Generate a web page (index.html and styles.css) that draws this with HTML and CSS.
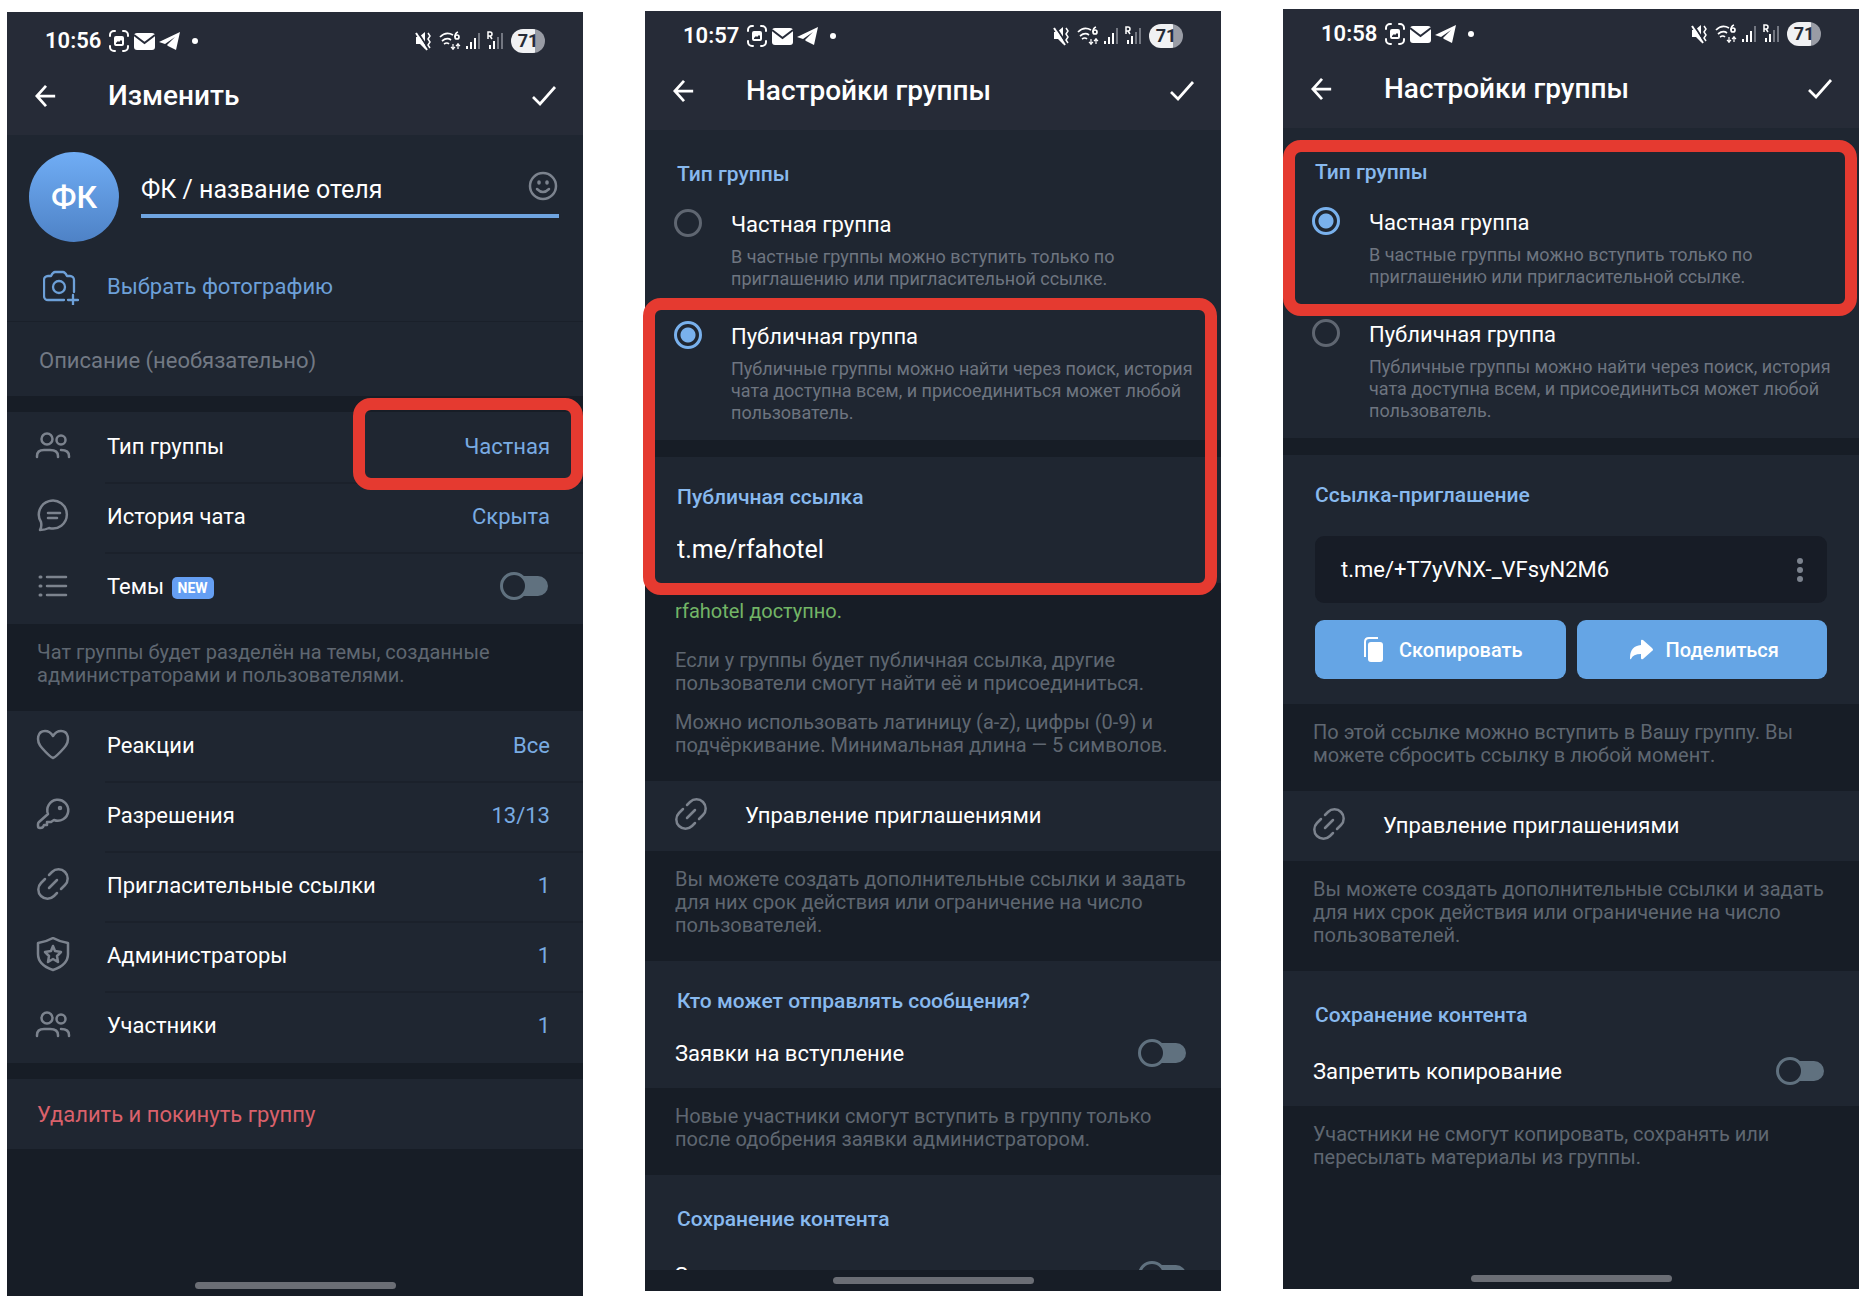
FILE: index.html
```html
<!DOCTYPE html>
<html lang="ru">

<head>
    <title>Настройки группы</title>
    <meta charset="utf-8">
    <meta name="viewport" content="width=device-width, initial-scale=1.0">
    <link rel="stylesheet" href="styles.css">
</head>

<body>
    <!-- shared icons -->
    <svg class="sprite" aria-hidden="true">
        <symbol id="i-notes" viewBox="0 0 94 22">
            <g fill="none" stroke="#fff" stroke-width="2" stroke-linecap="round">
                <path d="M1 6V5a4 4 0 0 1 4-4h1M14 1h1a4 4 0 0 1 4 4v1M19 16v1a4 4 0 0 1-4 4h-1M6 21H5a4 4 0 0 1-4-4v-1" />
            </g>
            <path fill="#fff" fill-rule="evenodd" d="M7 6h6a2 2 0 0 1 2 2v6a2 2 0 0 1-2 2H7a2 2 0 0 1-2-2V8a2 2 0 0 1 2-2zM7 14h6v-3l-1-1-2 2-1-1-2 2z" />
            <rect x="25" y="3" width="21" height="17" rx="3" fill="#fff" />
            <path d="M25 5l10.500 8L46 5" fill="none" stroke="#262b38" stroke-width="2" />
            <path fill="#fff" d="M71 2L50 12l6 2 10-7-8 8 1 1 8 4z" />
            <circle cx="86" cy="11" r="3" fill="#fff" />
        </symbol>
        <symbol id="i-signal" viewBox="0 0 90 24">
            <path fill="#fff" d="M1 8h3l6-5v17l-5-5H1z" />
            <path d="M2 2l11 17" stroke="#262b38" stroke-width="2" />
            <path d="M1 4l11 17" stroke="#fff" stroke-width="2" />
            <path d="M13 4l2 3-2 3 2 3-2 3 2 3" fill="none" stroke="#fff" stroke-width="1.500" />
            <g fill="none" stroke="#fff" stroke-width="1.700">
                <path d="M25 8q6-6 13-2M27 12q5-4 9-1M29 15q3-2 5 0" />
                <circle cx="42" cy="8" r="2" />
                <path d="M43 3q-3 1-3 5" />
                <path d="M38 15v6M36 18l2 2 2-2M43 20v-6M41 17l2-2 2 2" stroke-width="1.200" />
            </g>
            <path fill="#fff" d="M51 17h2v3h-2zM55 13h2v7h-2zM59 9h2v11h-2zM74 16h2v4h-2zM78 12h2v8h-2z" />
            <path fill="#737781" d="M63 4h2v16h-2zM82 8h2v12h-2zM86 4h2v16h-2z" />
            <path d="M73 10V3h2q2 0 2 2t-2 2h-2m2 0l2 3" fill="none" stroke="#fff" stroke-width="1.500" />
        </symbol>
        <symbol id="i-back" viewBox="0 0 24 24"><path d="M22 12H2M12 1L2 12l10 11" /></symbol>
        <symbol id="i-check" viewBox="0 0 26 24" stroke-width="2.700"><path d="M2 13l7 7L24 3" /></symbol>
        <symbol id="i-smile" viewBox="0 0 32 32" stroke-width="2.500">
            <circle cx="16" cy="16" r="13" /><path d="M10 19q6 6 12 0" /><path d="M12 12v1M20 12v1" stroke-width="3.500" />
        </symbol>
        <symbol id="i-camera" viewBox="0 0 36 36" stroke-width="2.300">
            <path d="M21 31H5a4 4 0 0 1-4-4V11a4 4 0 0 1 4-4h3q2-4 4-4h8q2 0 4 4h3a4 4 0 0 1 4 4v12M30 26v10M25 31h10" />
            <circle cx="16" cy="18" r="6" />
        </symbol>
        <symbol id="i-group" viewBox="0 0 36 36" stroke-width="2.500">
            <circle cx="12" cy="11" r="5.500" /><circle cx="26" cy="12" r="4.500" />
            <path d="M2 29v-1q0-6 7-6h6q8 0 8 6v1M26 22q8 0 8 6v1" />
        </symbol>
        <symbol id="i-chat" viewBox="0 0 36 36" stroke-width="2.500">
            <path d="M5 32q2-3 1-8A14 14 0 1 1 14 30q-4 2-9 2zM13 15h12M13 20h9" />
        </symbol>
        <symbol id="i-list" viewBox="0 0 36 36" stroke-width="2.500">
            <path d="M12 9h19M12 18h19M12 27h19" /><path d="M5 9h1M5 18h1M5 27h1" stroke-width="3" />
        </symbol>
        <symbol id="i-heart" viewBox="0 0 36 36" stroke-width="2.500">
            <path d="M18 31q-3-1-11-10C0 13 3 4 10 4q5 0 8 5 3-5 8-5c7 0 10 9 3 17q-8 9-11 10z" />
        </symbol>
        <symbol id="i-key" viewBox="0 0 36 36" stroke-width="2.500">
            <path d="M13 17A10.500 10.500 0 1 1 19 23l-3 2h-4v3H9l-1 2q-1 1-3 1-2 0-2-2v-2q0-1 1-2z" /><circle cx="25" cy="11" r="1" />
        </symbol>
        <symbol id="i-link" viewBox="0 0 36 36" stroke-width="2.500">
            <path d="M14 8l3-3a9 9 0 0 1 13 13l-4 4M22 26l-3 3A9 9 0 0 1 6 16l4-4M14 21l8-8" />
        </symbol>
        <symbol id="i-shield" viewBox="0 0 36 36" stroke-width="2.500">
            <path d="M18 1q7 4 15 5v11q0 11-15 16Q3 28 3 17V6q8-1 15-5z" />
            <path d="M18 9l2 5 6 1-4 4 1 6-5-3-5 3 1-6-4-4 6-1z" />
        </symbol>
    </svg>

    <div class="screens">
        <!-- edit group -->
        <div class="phone phone-edit">
            <header>
                <div class="status">
                    <span class="time">10:56</span>
                    <svg class="notes"><use href="#i-notes" /></svg>
                    <svg class="signal"><use href="#i-signal" /></svg>
                    <span class="battery">71</span>
                </div>
                <div class="bar">
                    <button class="tool" aria-label="Назад"><svg class="back"><use href="#i-back" /></svg></button>
                    <h1>Изменить</h1>
                    <button class="tool" aria-label="Готово"><svg class="check"><use href="#i-check" /></svg></button>
                </div>
            </header>
            <main>
                <section>
                    <div class="profile">
                        <div class="avatar">ФК</div>
                        <div class="name">
                            <input type="text" aria-label="Название группы" value="ФК / название отеля">
                            <button class="tool" aria-label="Эмодзи"><svg class="smile"><use href="#i-smile" /></svg></button>
                        </div>
                    </div>
                    <button class="photo">
                        <svg class="icon camera"><use href="#i-camera" /></svg>
                        Выбрать фотографию
                    </button>
                    <input class="about" type="text" aria-label="Описание" placeholder="Описание (необязательно)">
                </section>
                <section class="gap rows">
                    <a class="row" href="#"><svg class="icon"><use href="#i-group" /></svg><span>Тип группы</span><b>Частная</b><i class="mark mark-value"></i></a>
                    <a class="row" href="#"><svg class="icon"><use href="#i-chat" /></svg><span>История чата</span><b>Скрыта</b></a>
                    <label class="row"><svg class="icon"><use href="#i-list" /></svg><span>Темы <em>NEW</em></span><input class="switch" type="checkbox"></label>
                </section>
                <p class="note">Чат группы будет разделён на темы, созданные администраторами и пользователями.</p>
                <section class="rows">
                    <a class="row" href="#"><svg class="icon"><use href="#i-heart" /></svg><span>Реакции</span><b>Все</b></a>
                    <a class="row" href="#"><svg class="icon"><use href="#i-key" /></svg><span>Разрешения</span><b>13/13</b></a>
                    <a class="row" href="#"><svg class="icon"><use href="#i-link" /></svg><span>Пригласительные ссылки</span><b>1</b></a>
                    <a class="row" href="#"><svg class="icon"><use href="#i-shield" /></svg><span>Администраторы</span><b>1</b></a>
                    <a class="row" href="#"><svg class="icon"><use href="#i-group" /></svg><span>Участники</span><b>1</b></a>
                </section>
                <section class="gap">
                    <button class="delete">Удалить и покинуть группу</button>
                </section>
            </main>
            <footer></footer>
        </div>

        <!-- public group -->
        <div class="phone phone-public">
            <header>
                <div class="status">
                    <span class="time">10:57</span>
                    <svg class="notes"><use href="#i-notes" /></svg>
                    <svg class="signal"><use href="#i-signal" /></svg>
                    <span class="battery">71</span>
                </div>
                <div class="bar">
                    <button class="tool" aria-label="Назад"><svg class="back"><use href="#i-back" /></svg></button>
                    <h1>Настройки группы</h1>
                    <button class="tool" aria-label="Готово"><svg class="check"><use href="#i-check" /></svg></button>
                </div>
            </header>
            <main>
                <section class="types">
                    <h2>Тип группы</h2>
                    <label class="option">
                        <input type="radio" name="public-type">
                        <span>Частная группа<small>В частные группы можно вступить только по приглашению или пригласительной ссылке.</small></span>
                    </label>
                    <label class="option">
                        <input type="radio" name="public-type" checked>
                        <span>Публичная группа<small>Публичные группы можно найти через поиск, история чата доступна всем, и присоединиться может любой пользователь.</small></span>
                    </label>
                </section>
                <section class="gap">
                    <h2>Публичная ссылка</h2>
                    <input class="address" type="text" aria-label="Публичная ссылка" value="t.me/rfahotel">
                </section>
                <div class="note note-link">
                    <p class="ok">rfahotel доступно.</p>
                    <p>Если у группы будет публичная ссылка, другие пользователи смогут найти её и присоединиться.</p>
                    <p>Можно использовать латиницу (a-z), цифры (0-9) и подчёркивание. Минимальная длина — 5 символов.</p>
                </div>
                <section>
                    <a class="row" href="#"><svg class="icon"><use href="#i-link" /></svg><span>Управление приглашениями</span></a>
                </section>
                <p class="note">Вы можете создать дополнительные ссылки и задать для них срок действия или ограничение на число пользователей.</p>
                <section>
                    <h2>Кто может отправлять сообщения?</h2>
                    <label class="row plain"><span>Заявки на вступление</span><input class="switch" type="checkbox"></label>
                </section>
                <p class="note">Новые участники смогут вступить в группу только после одобрения заявки администратором.</p>
                <section class="saving">
                    <h2>Сохранение контента</h2>
                    <label class="row plain"><span>Запретить копирование</span><input class="switch" type="checkbox"></label>
                </section>
            </main>
            <footer></footer>
            <i class="mark mark-public"></i>
        </div>

        <!-- private group -->
        <div class="phone phone-private">
            <header>
                <div class="status">
                    <span class="time">10:58</span>
                    <svg class="notes"><use href="#i-notes" /></svg>
                    <svg class="signal"><use href="#i-signal" /></svg>
                    <span class="battery">71</span>
                </div>
                <div class="bar">
                    <button class="tool" aria-label="Назад"><svg class="back"><use href="#i-back" /></svg></button>
                    <h1>Настройки группы</h1>
                    <button class="tool" aria-label="Готово"><svg class="check"><use href="#i-check" /></svg></button>
                </div>
            </header>
            <main>
                <section class="types">
                    <h2>Тип группы</h2>
                    <label class="option">
                        <input type="radio" name="private-type" checked>
                        <span>Частная группа<small>В частные группы можно вступить только по приглашению или пригласительной ссылке.</small></span>
                    </label>
                    <label class="option">
                        <input type="radio" name="private-type">
                        <span>Публичная группа<small>Публичные группы можно найти через поиск, история чата доступна всем, и присоединиться может любой пользователь.</small></span>
                    </label>
                </section>
                <section class="gap">
                    <h2>Ссылка-приглашение</h2>
                    <div class="link">
                        <a href="#">t.me/+T7yVNX-_VFsyN2M6</a>
                        <button class="tool" aria-label="Ещё">
                            <svg class="dots" viewBox="0 0 6 26"><circle cx="3" cy="4" r="3" /><circle cx="3" cy="13" r="3" /><circle cx="3" cy="22" r="3" /></svg>
                        </button>
                    </div>
                    <div class="buttons">
                        <button>
                            <svg viewBox="0 0 28 28"><path d="M7 21V6q0-4 4-4h9" fill="none" stroke="#fff" stroke-width="2" /><rect x="10" y="6" width="15" height="20" rx="3" /></svg>
                            Скопировать
                        </button>
                        <button>
                            <svg viewBox="0 0 28 28"><path d="M16 9V5q0-2 2-1l9 8q2 2 0 3l-9 8q-2 1-2-1v-4q-8 0-10 5-1 1-1-1Q5 10 16 9z" /></svg>
                            Поделиться
                        </button>
                    </div>
                </section>
                <p class="note">По этой ссылке можно вступить в Вашу группу. Вы можете сбросить ссылку в любой момент.</p>
                <section>
                    <a class="row" href="#"><svg class="icon"><use href="#i-link" /></svg><span>Управление приглашениями</span></a>
                </section>
                <p class="note">Вы можете создать дополнительные ссылки и задать для них срок действия или ограничение на число пользователей.</p>
                <section class="saving">
                    <h2>Сохранение контента</h2>
                    <label class="row plain"><span>Запретить копирование</span><input class="switch" type="checkbox"></label>
                </section>
                <p class="note">Участники не смогут копировать, сохранять или пересылать материалы из группы.</p>
            </main>
            <footer></footer>
            <i class="mark mark-private"></i>
        </div>
    </div>
</body>

</html>
```
FILE: styles.css
```css
*,
*::before,
*::after {
    box-sizing: border-box;
}

body {
    margin: 0;
    background-color: white;
    font-family: Roboto, "Noto Sans", sans-serif;
    font-size: 22px;
    color: white;
}

button,
input {
    font: inherit;
    color: inherit;
    background: none;
    border: none;
    margin: 0;
    padding: 0;
}

button,
label {
    cursor: pointer;
}

a {
    color: inherit;
    text-decoration: none;
}

svg {
    display: block;
    flex: none;
}

.sprite {
    position: absolute;
    width: 0;
    height: 0;
}

.screens {
    display: grid;
    grid-template-columns: repeat(3, 1fr);
    gap: 62px;
    padding: 9px 6px 0 7px;
    height: 100vh;
    overflow: hidden;
}

.phone {
    position: relative;
    display: flex;
    flex-direction: column;
    height: calc(100vh - 16px);
    background-color: #171d26;
}

.phone-edit {
    margin-top: 3px;
    height: calc(100vh - 12px);
}

.phone-public {
    margin-top: 2px;
}

/* header */
header {
    background-color: #262b37;
    padding-top: 10px;
}

.phone-edit header {
    padding-top: 14px;
}

.status {
    display: flex;
    align-items: center;
    height: 30px;
    padding: 0 38px;
}

.time {
    width: 64px;
    font-weight: 600;
    line-height: 30px;
}

.notes {
    width: 94px;
    height: 22px;
}

.signal {
    width: 90px;
    height: 24px;
    margin-left: auto;
    margin-right: 6px;
}

.battery {
    width: 34px;
    height: 24px;
    border-radius: 12px;
    background: linear-gradient(to right, #f0f1f3 70%, #999ca5 70%);
    color: #262b37;
    font-size: 18px;
    font-weight: 700;
    line-height: 24px;
    text-align: center;
}

.bar {
    display: flex;
    align-items: center;
    height: 79px;
    padding: 0 26px 0 28px;
}

.tool {
    fill: none;
    stroke: white;
    stroke-width: 3;
}

.back {
    width: 22px;
    height: 24px;
}

.check {
    width: 26px;
    height: 24px;
}

h1 {
    flex: 1;
    margin: 0 0 0 51px;
    font-size: 28px;
    font-weight: 500;
}

/* content */
main {
    flex: 1;
    min-height: 0;
    overflow: hidden;
}

section {
    background-color: #1f2631;
}

.gap {
    margin-top: 17px;
}

.phone-edit .gap {
    margin-top: 16px;
}

.rows {
    padding-bottom: 2px;
}

h2 {
    margin: 0;
    padding: 28px 32px 0;
    font-size: 21px;
    font-weight: 500;
    line-height: 24px;
    color: #88b9ee;
}

.icon {
    width: 36px;
    height: 36px;
    fill: none;
    stroke: #7c838e;
    stroke-linecap: round;
    stroke-linejoin: round;
}

.profile {
    display: flex;
    align-items: center;
    gap: 22px;
    padding: 17px 24px 0 22px;
}

.avatar {
    width: 90px;
    height: 90px;
    border-radius: 50%;
    background: linear-gradient(#70adf5, #4e82c6);
    font-size: 32px;
    font-weight: 500;
    line-height: 90px;
    text-align: center;
}

.name {
    flex: 1;
    display: flex;
    align-items: center;
    height: 60px;
    border-bottom: 4px solid #6fa4e0;
    margin-bottom: 18px;
}

.name input {
    flex: 1;
    min-width: 0;
    padding-top: 6px;
    font-size: 25px;
}

.smile {
    width: 32px;
    height: 32px;
    stroke: #7c838e;
    stroke-linecap: round;
}

.photo {
    display: flex;
    align-items: center;
    gap: 28px;
    width: 100%;
    height: 80px;
    padding: 10px 36px 0;
    border-bottom: 1px solid #1a202a;
    color: #6da0d8;
}

.camera {
    stroke: #6da0d8;
}

.about {
    display: block;
    width: 100%;
    height: 74px;
    padding: 2px 32px 0;
}

.about::placeholder {
    color: #727984;
}

.row {
    position: relative;
    display: flex;
    align-items: center;
    gap: 28px;
    min-height: 70px;
    padding: 0 33px 2px 28px;
}

.row + .row::before {
    content: "";
    position: absolute;
    top: 0;
    left: 98px;
    right: 0;
    border-top: 2px solid #1b212b;
}

.row span {
    flex: 1;
    padding-left: 8px;
}

.row b {
    font-weight: 400;
    color: #79abe2;
}

.row em {
    display: inline-block;
    margin-left: 2px;
    padding: 0 6px;
    border-radius: 5px;
    background-color: #659ff3;
    font-size: 14px;
    font-style: normal;
    font-weight: 700;
    line-height: 22px;
    vertical-align: 1px;
}

.row.plain {
    min-height: 75px;
    padding-top: 7px;
}

.plain span {
    padding-left: 2px;
}

.switch {
    appearance: none;
    position: relative;
    width: 48px;
    height: 28px;
    margin-right: 2px;
}

.switch::before {
    content: "";
    position: absolute;
    inset: 4px 0 4px 12px;
    border-radius: 10px;
    background-color: #60717f;
}

.switch::after {
    content: "";
    position: absolute;
    top: 0;
    left: 0;
    width: 28px;
    height: 28px;
    border: 3px solid #60717f;
    border-radius: 50%;
    background-color: #1f2631;
}

.note {
    margin: 0;
    padding: 17px 26px 24px 30px;
    font-size: 20px;
    line-height: 23px;
    color: #5f6771;
}

.delete {
    display: block;
    width: 100%;
    height: 70px;
    padding: 0 30px;
    text-align: left;
    color: #d9616b;
}

/* group type */
.types {
    padding-bottom: 8px;
}

.types h2 {
    padding-top: 32px;
}

.option {
    display: flex;
    gap: 29px;
    padding: 23px 24px 8px 29px;
    line-height: 28px;
}

.option span {
    padding-top: 2px;
}

.option small {
    display: block;
    padding-top: 7px;
    font-size: 18px;
    line-height: 22px;
    color: #6e7580;
}

.option input {
    appearance: none;
    flex: none;
    width: 28px;
    height: 28px;
    border: 3px solid #5f6671;
    border-radius: 50%;
}

.option input:checked {
    border-color: #79b1ed;
    background: radial-gradient(circle, #79b1ed 7px, transparent 8px);
}

.address {
    display: block;
    width: 100%;
    height: 74px;
    padding: 6px 32px 0;
    font-size: 25px;
}

.note-link p {
    margin: 0 0 16px;
}

.note-link .ok {
    margin-bottom: 26px;
    color: #73b566;
}

.note-link p:last-child {
    margin-bottom: 0;
}

.saving h2 {
    padding-top: 32px;
}

.saving .plain {
    min-height: 79px;
    padding-top: 11px;
}

.link {
    display: flex;
    align-items: center;
    justify-content: space-between;
    height: 67px;
    margin: 29px 32px 17px;
    padding: 0 24px 0 26px;
    border-radius: 9px;
    background-color: #171c26;
}

.dots {
    width: 6px;
    height: 26px;
    fill: #7c838e;
    stroke: none;
}

.buttons {
    display: grid;
    grid-template-columns: 1fr 1fr;
    gap: 11px;
    padding: 0 32px 25px;
}

.buttons button {
    display: flex;
    align-items: center;
    justify-content: center;
    gap: 13px;
    height: 59px;
    border-radius: 9px;
    background-color: #65a5e5;
    font-size: 20px;
    font-weight: 500;
}

.buttons svg {
    width: 28px;
    height: 28px;
    fill: white;
}

/* gesture bar */
footer {
    display: flex;
    align-items: center;
    justify-content: center;
    height: 21px;
}

footer::before {
    content: "";
    width: 201px;
    height: 7px;
    border-radius: 4px;
    background-color: #6b6e75;
}

/* red frames over the screens */
.mark {
    position: absolute;
    border: 12px solid #e53a30;
    border-radius: 18px;
    pointer-events: none;
}

.mark-value {
    inset: -14px 0 -8px auto;
    width: 230px;
    z-index: 1;
}

.mark-public {
    inset: 287px 4px auto -2px;
    height: 297px;
}

.mark-private {
    inset: 131px 2px auto 0;
    height: 176px;
}
```
